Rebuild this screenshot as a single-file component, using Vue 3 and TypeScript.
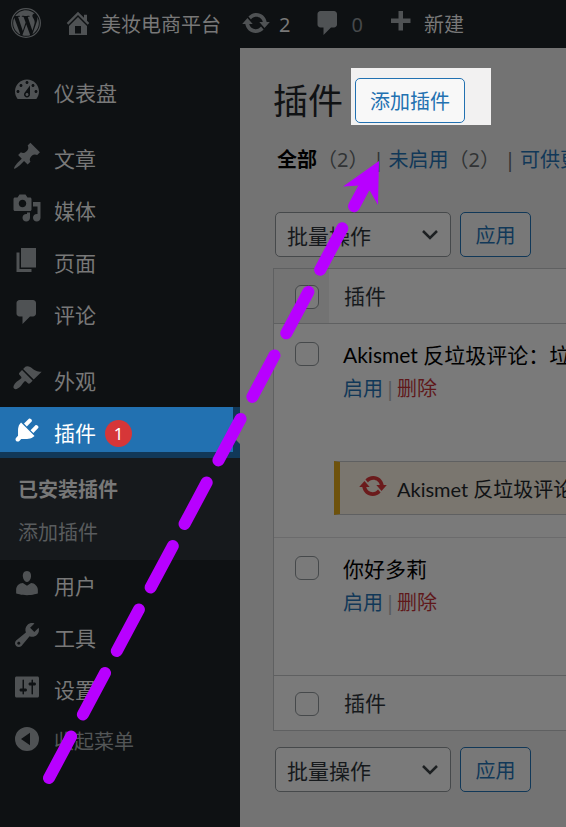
<script setup lang="ts">
import { ref } from 'vue'

interface MenuItem {
  label: string
  icon: string
}

interface Plugin {
  id: string
  name: string
  notice?: string
}

const icons: Record<string, string> = {
  home: 'M16 8.5l1.53 1.53-1.06 1.06L10 4.6l-6.47 6.49-1.06-1.06L10 2.5l4 4v-2h2v4zm-6-2.46l6 5.99V18H4v-5.97zM12 17v-5H8v5h4z',
  update:
    'M10.2 3.28c3.53 0 6.43 2.61 6.92 6h2.08l-3.5 4-3.5-4h2.32c-.45-1.97-2.21-3.45-4.32-3.45-1.45 0-2.73.71-3.54 1.78L4.95 5.66C6.23 4.2 8.11 3.28 10.2 3.28zm-.4 13.44c-3.52 0-6.43-2.61-6.92-6H.8l3.5-4c1.17 1.33 2.33 2.67 3.5 4H5.48c.45 1.97 2.21 3.45 4.32 3.45 1.45 0 2.73-.71 3.54-1.78l1.71 1.95c-1.28 1.46-3.15 2.38-5.25 2.38z',
  comments:
    'M5 2h9c1.1 0 2 .9 2 2v7c0 1.1-.9 2-2 2h-2l-5 5v-5H5c-1.1 0-2-.9-2-2V4c0-1.1.9-2 2-2z',
  plus: 'M17 7v3h-5v5H9v-5H4V7h5V2h3v5h5z',
  dashboard:
    'M3.76 16h12.48c1.1-1.37 1.76-3.11 1.76-5 0-4.42-3.58-8-8-8s-8 3.58-8 8c0 1.89.66 3.63 1.76 5zM10 4c.55 0 1 .45 1 1s-.45 1-1 1-1-.45-1-1 .45-1 1-1zM6 6c.55 0 1 .45 1 1s-.45 1-1 1-1-.45-1-1 .45-1 1-1zm8 0c.55 0 1 .45 1 1s-.45 1-1 1-1-.45-1-1 .45-1 1-1zm-5.37 5.55L12 7v6c0 1.1-.9 2-2 2s-2-.9-2-2c0-.57.24-1.08.63-1.45zM4 10c.55 0 1 .45 1 1s-.45 1-1 1-1-.45-1-1 .45-1 1-1zm12 0c.55 0 1 .45 1 1s-.45 1-1 1-1-.45-1-1 .45-1 1-1zm-5 3c0-.55-.45-1-1-1s-1 .45-1 1 .45 1 1 1 1-.45 1-1z',
  post: 'M10.44 3.02l1.82-1.82 6.36 6.35-1.83 1.82c-1.05-.68-2.48-.57-3.41.36l-.75.75c-.92.93-1.04 2.35-.35 3.41l-1.83 1.82-2.41-2.41-2.8 2.79c-.42.42-3.38 2.71-3.8 2.29s1.86-3.39 2.28-3.81l2.79-2.79L4.1 9.36l1.83-1.82c1.05.69 2.48.57 3.4-.36l.75-.75c.93-.92 1.05-2.35.36-3.41z',
  media:
    'M13 11V4c0-.55-.45-1-1-1h-1.67L9 1H5L3.67 3H2c-.55 0-1 .45-1 1v7c0 .55.45 1 1 1h10c.55 0 1-.45 1-1zM7 4.5c1.38 0 2.5 1.12 2.5 2.5S8.38 9.5 7 9.5 4.5 8.38 4.5 7 5.62 4.5 7 4.5zM14 6h5v10.5c0 1.38-1.12 2.5-2.5 2.5S14 17.88 14 16.5s1.12-2.5 2.5-2.5c.17 0 .34.02.5.05V9h-3V6zm-4 8.05V13h2v3.5c0 1.38-1.12 2.5-2.5 2.5S7 17.88 7 16.5 8.12 14 9.5 14c.17 0 .34.02.5.05z',
  page: 'M6 15V2h10v13H6zm-1 1h8v2H3V5h2v11z',
  appearance:
    'M14.48 11.06L7.41 3.99l1.5-1.5c.5-.56 2.3-.47 3.51.32 1.21.8 1.43 1.28 2.91 2.1 1.18.64 2.45 1.26 4.45.85zm-.71.71L6.7 4.7 4.93 6.47c-.39.39-.39 1.02 0 1.41l1.06 1.06c.39.39.39 1.03 0 1.42-.6.6-1.43 1.11-2.21 1.69-.35.26-.7.53-1.01.84C1.43 14.23.4 16.08 1.4 17.07c.99 1 2.84-.03 4.18-1.36.31-.31.58-.66.85-1.02.57-.78 1.08-1.61 1.69-2.21.39-.39 1.02-.39 1.41 0l1.06 1.06c.39.39 1.02.39 1.41 0z',
  plugins:
    'M13.11 4.36L9.87 7.6 8 5.73l3.24-3.24c.35-.34 1.05-.2 1.56.32.52.51.66 1.21.31 1.55zm-8 1.77l.91-1.12 9.01 9.01-1.19.84c-.71.71-2.63 1.16-3.82 1.16H6.14L4.9 17.26c-.59.59-1.54.59-2.12 0-.59-.58-.59-1.53 0-2.12l1.24-1.24v-3.88c0-1.13.4-3.19 1.09-3.89zm7.26 3.97l3.24-3.24c.34-.35 1.04-.21 1.55.31.52.51.66 1.21.31 1.55l-3.24 3.25z',
  users:
    'M10 9.25c-2.27 0-2.73-3.44-2.73-3.44C7 4.02 7.82 2 9.97 2c2.16 0 2.98 2.02 2.71 3.81 0 0-.41 3.44-2.68 3.44zm0 2.57L12.72 10c2.39 0 4.52 2.33 4.52 4.53v2.49s-3.65 1.13-7.24 1.13c-3.65 0-7.24-1.13-7.24-1.13v-2.49c0-2.25 1.94-4.48 4.47-4.48z',
  tools:
    'M16.68 9.77c-1.34 1.34-3.3 1.67-4.95.99l-5.41 6.52c-.99.99-2.59.99-3.58 0s-.99-2.59 0-3.57l6.52-5.42c-.68-1.65-.35-3.61.99-4.95 1.28-1.28 3.12-1.62 4.72-1.06l-2.89 2.89 2.82 2.82 2.86-2.87c.53 1.58.18 3.39-1.08 4.65zM3.81 16.21c.4.39 1.04.39 1.43 0 .4-.4.4-1.04 0-1.43-.39-.4-1.03-.4-1.43 0-.39.39-.39 1.03 0 1.43z',
  settings:
    'M18 16V4c0-.55-.45-1-1-1H3c-.55 0-1 .45-1 1v12c0 .55.45 1 1 1h14c.55 0 1-.45 1-1zM8 11h1c.55 0 1 .45 1 1s-.45 1-1 1H8v1.5c0 .28-.22.5-.5.5s-.5-.22-.5-.5V13H6c-.55 0-1-.45-1-1s.45-1 1-1h1V5.5c0-.28.22-.5.5-.5s.5.22.5.5V11zm5-2h-1c-.55 0-1-.45-1-1s.45-1 1-1h1V5.5c0-.28.22-.5.5-.5s.5.22.5.5V7h1c.55 0 1 .45 1 1s-.45 1-1 1h-1v5.5c0 .28-.22.5-.5.5s-.5-.22-.5-.5V9z',
  collapse: 'M10 2a8 8 0 1 0 0 16 8 8 0 0 0 0-16zM12 5.8v8.4L6 10z',
}

const menuGroups: MenuItem[][] = [
  [{ label: '仪表盘', icon: 'dashboard' }],
  [
    { label: '文章', icon: 'post' },
    { label: '媒体', icon: 'media' },
    { label: '页面', icon: 'page' },
    { label: '评论', icon: 'comments' },
  ],
  [{ label: '外观', icon: 'appearance' }],
]

const lowerMenu: MenuItem[] = [
  { label: '用户', icon: 'users' },
  { label: '工具', icon: 'tools' },
  { label: '设置', icon: 'settings' },
]

const plugins: Plugin[] = [
  { id: 'akismet', name: 'Akismet 反垃圾评论：垃圾评论保护', notice: 'Akismet 反垃圾评论：垃圾评论保护有新版本可用。' },
  { id: 'dolly', name: '你好多莉' },
]

const selected = ref<string[]>([])
const bulkTop = ref('bulk')
const bulkBottom = ref('bulk')
</script>

<template>
  <div class="admin">
    <header class="topbar">
      <a href="#" class="bar-item logo" aria-label="WordPress">
        <svg class="icon" viewBox="0 0 122.520 122.520">
          <path
            d="M8.708 61.26c0 20.802 12.089 38.779 29.619 47.298l-25.069-68.686c-2.916 6.536-4.55 13.769-4.55 21.388zM96.74 58.608c0-6.495-2.333-10.993-4.334-14.494-2.664-4.329-5.161-7.995-5.161-12.324 0-4.831 3.664-9.328 8.825-9.328.233 0 .454.029.681.042-9.35-8.566-21.807-13.796-35.489-13.796-18.36 0-34.513 9.42-43.91 23.688 1.233.037 2.395.063 3.382.063 5.497 0 14.006-.667 14.006-.667 2.833-.167 3.167 3.994.337 4.329 0 0-2.847.335-6.015.501L48.2 93.547l11.501-34.493-8.188-22.434c-2.83-.166-5.511-.501-5.511-.501-2.832-.166-2.5-4.496.332-4.329 0 0 8.679.667 13.843.667 5.496 0 14.006-.667 14.006-.667 2.835-.167 3.168 3.994.337 4.329 0 0-2.853.335-6.015.501l18.992 56.494 5.242-17.517c2.272-7.269 4.001-12.49 4.001-16.989zM62.184 65.857l-15.768 45.819c4.708 1.384 9.687 2.141 14.846 2.141 6.12 0 11.989-1.058 17.452-2.979-.141-.225-.269-.464-.374-.724zM107.376 36.046c.226 1.674.354 3.471.354 5.404 0 5.333-.996 11.328-3.996 18.824l-16.053 46.413c15.624-9.111 26.133-26.038 26.133-45.426.001-9.137-2.333-17.729-6.438-25.215z"
          />
          <circle class="ring" cx="61.260" cy="61.260" r="58.700" />
        </svg>
      </a>
      <a href="#" class="bar-item site">
        <svg class="icon" viewBox="0 0 20 20"><path :d="icons.home" /></svg>
        <span>美妆电商平台</span>
      </a>
      <a href="#" class="bar-item updates">
        <svg class="icon" viewBox="0 0 20 20"><path :d="icons.update" /></svg>
        <span>2</span>
      </a>
      <a href="#" class="bar-item remarks">
        <svg class="icon" viewBox="0 0 20 20"><path :d="icons.comments" /></svg>
        <span class="faint">0</span>
      </a>
      <a href="#" class="bar-item create">
        <svg class="icon" viewBox="0 0 20 20"><path :d="icons.plus" /></svg>
        <span>新建</span>
      </a>
    </header>

    <div class="body">
      <nav class="sidebar">
        <div v-for="(group, g) in menuGroups" :key="g" class="group">
          <a v-for="item in group" :key="item.label" href="#" class="menu-item">
            <svg class="icon" viewBox="0 0 20 20"><path :d="icons[item.icon]" /></svg>
            <span>{{ item.label }}</span>
          </a>
        </div>
        <div class="current">
          <a href="#" class="menu-item">
            <svg class="icon" viewBox="0 0 20 20"><path :d="icons.plugins" /></svg>
            <span>插件</span>
            <span class="badge">1</span>
          </a>
        </div>
        <div class="submenu">
          <a href="#" class="active">已安装插件</a>
          <a href="#">添加插件</a>
        </div>
        <a v-for="item in lowerMenu" :key="item.label" href="#" class="menu-item">
          <svg class="icon" viewBox="0 0 20 20"><path :d="icons[item.icon]" /></svg>
          <span>{{ item.label }}</span>
        </a>
        <button type="button" class="menu-item collapse">
          <svg class="icon" viewBox="0 0 20 20"><path fill-rule="evenodd" :d="icons.collapse" /></svg>
          <span>收起菜单</span>
        </button>
      </nav>

      <main class="content">
        <div class="title-row">
          <h1>插件</h1>
          <div class="spotlight">
            <button type="button" class="add">添加插件</button>
          </div>
        </div>

        <div class="filters">
          <a href="#" class="all">全部</a><span class="count">（2）</span><span class="bar">|</span>
          <a href="#">未启用</a><span class="count">（2）</span><span class="bar">|</span>
          <a href="#">可供更新</a>
        </div>

        <div class="actions top">
          <div class="picker">
            <select v-model="bulkTop" aria-label="批量操作">
              <option value="bulk">批量操作</option>
              <option value="activate">启用</option>
              <option value="delete">删除</option>
            </select>
            <svg class="chevron" viewBox="0 0 18 12"><path d="M2 2l7 7 7-7" /></svg>
          </div>
          <button type="button" class="apply">应用</button>
        </div>

        <table class="plugins">
          <thead>
            <tr>
              <td class="check shaded"><input type="checkbox" aria-label="全选" /></td>
              <th scope="col">插件</th>
            </tr>
          </thead>
          <tbody v-for="plugin in plugins" :key="plugin.id">
            <tr class="plugin">
              <td class="check">
                <input :id="plugin.id" v-model="selected" type="checkbox" :value="plugin.id" />
              </td>
              <td>
                <label class="name" :for="plugin.id">{{ plugin.name }}</label>
                <div class="links">
                  <a href="#">启用</a><span>|</span><a href="#" class="delete">删除</a>
                </div>
              </td>
            </tr>
            <tr v-if="plugin.notice">
              <td colspan="2" class="notice-cell">
                <div class="notice">
                  <svg class="icon" viewBox="0 0 20 20"><path :d="icons.update" /></svg>
                  <p>{{ plugin.notice }}</p>
                </div>
              </td>
            </tr>
          </tbody>
          <tfoot>
            <tr>
              <td class="check"><input type="checkbox" aria-label="全选" /></td>
              <th scope="col">插件</th>
            </tr>
          </tfoot>
        </table>

        <div class="actions">
          <div class="picker">
            <select v-model="bulkBottom" aria-label="批量操作">
              <option value="bulk">批量操作</option>
              <option value="activate">启用</option>
              <option value="delete">删除</option>
            </select>
            <svg class="chevron" viewBox="0 0 18 12"><path d="M2 2l7 7 7-7" /></svg>
          </div>
          <button type="button" class="apply">应用</button>
        </div>
      </main>
    </div>

    <svg class="pointer" width="400" height="800" viewBox="0 0 400 800" aria-hidden="true">
      <path class="shaft" d="M49 778L367 182" />
      <path class="head" d="M379 161L343 186.500L359.500 185.500L370 191L378 205z" />
    </svg>
  </div>
</template>

<style>
body {
  margin: 0;
  background: #737373;
}
</style>

<style scoped>
.admin {
  position: relative;
  display: flex;
  flex-direction: column;
  min-height: 100vh;
  overflow: hidden;
  font-family: "Noto Sans", "Noto Sans CJK SC", sans-serif;
  font-size: 20px;
  line-height: 28px;
  white-space: nowrap;
  color: #101214;
  background: #737373;
}

a {
  color: #113858;
  text-decoration: none;
}

button,
select {
  font: inherit;
  cursor: pointer;
}

.icon {
  flex: none;
  width: 30px;
  height: 30px;
  fill: #4f5254;
}

.ring {
  fill: none;
  stroke: #4f5254;
  stroke-width: 5;
}

.topbar {
  display: flex;
  align-items: center;
  height: 48px;
  padding-left: 11px;
  background: #0e1113;
}

.bar-item {
  display: flex;
  align-items: center;
  gap: 8px;
  color: #787878;
}

.bar-item span {
  padding-top: 2px;
}

.bar-item .icon {
  margin-bottom: 2px;
}

.bar-item .faint {
  color: #46494b;
}

.site {
  margin-left: 22px;
}

.updates {
  margin-left: 20px;
}

.remarks {
  margin-left: 23px;
}

.create {
  gap: 9px;
  margin-left: 22px;
}

.body {
  display: flex;
  flex: 1;
}

.sidebar {
  flex: none;
  width: 240px;
  padding-top: 19px;
  background: #0e1113;
}

.group {
  margin-bottom: 14px;
}

.group:nth-child(3) {
  margin-bottom: 0;
}

.menu-item {
  display: flex;
  align-items: flex-start;
  gap: 12px;
  box-sizing: border-box;
  height: 52px;
  padding: 8px 12px;
  font-size: 21px;
  line-height: 36px;
  color: #787878;
}

.current {
  position: relative;
  height: 51px;
  background: #113858;
}

.current::after {
  content: "";
  position: absolute;
  top: 21px;
  right: 0;
  border: 8px solid transparent;
  border-left-width: 0;
  border-right-color: #737373;
}

.current .menu-item {
  height: 45px;
  margin-right: 7px;
  color: #fff;
  background: #2271b1;
}

.current .icon {
  fill: #fff;
}

.badge {
  width: 27px;
  height: 27px;
  margin: 5px 0 0 -3px;
  border-radius: 50%;
  font-size: 17px;
  line-height: 27px;
  text-align: center;
  background: #d63638;
}

.submenu {
  display: flex;
  flex-direction: column;
  gap: 15px;
  box-sizing: border-box;
  height: 102px;
  padding: 18px 18px 13px;
  background: #16191c;
}

.submenu a {
  color: #595c5e;
}

.submenu .active {
  font-weight: 700;
  color: #787878;
}

.collapse {
  width: 100%;
  height: 48px;
  border: 0;
  font-size: 20px;
  text-align: left;
  color: #535657;
  background: none;
}

.content {
  flex: 1;
  min-width: 0;
  padding: 20px 0 20px 33px;
}

.title-row {
  display: flex;
  align-items: flex-start;
  gap: 8px;
}

h1 {
  margin: 0;
  padding-top: 10px;
  font-size: 35px;
  font-weight: 400;
  line-height: 46px;
}

.spotlight {
  padding: 10px 26px 2px 4px;
  background: #f2f1f1;
}

.add,
.apply {
  box-sizing: border-box;
  height: 45px;
  padding: 2px 14px 0;
  border: 1px solid #113858;
  border-radius: 5px;
  color: #113858;
  background: #787878;
}

.add {
  display: block;
  border-color: #2271b1;
  color: #2271b1;
  background: #f8f8f8;
}

.filters {
  display: flex;
  padding: 21px 0 0 4px;
  color: #313335;
}

.filters > * {
  flex: none;
}

.all {
  font-weight: 700;
  color: #000;
}

.bar {
  width: 20px;
  text-align: center;
}

.actions {
  display: flex;
  gap: 9px;
  padding: 16px 0 0 2px;
}

.actions.top {
  padding: 38px 0 11px 2px;
}

.apply {
  width: 71px;
}

.picker {
  display: grid;
  align-items: center;
  width: 176px;
}

.picker > * {
  grid-area: 1 / 1;
}

.picker select {
  appearance: none;
  width: 100%;
  height: 45px;
  padding: 2px 36px 0 11px;
  border: 1px solid #46494b;
  border-radius: 5px;
  font-size: 21px;
  color: #16191c;
  background: #7a7a7a;
}

.chevron {
  justify-self: end;
  width: 18px;
  height: 12px;
  margin-right: 12px;
  fill: none;
  stroke: #1d2022;
  stroke-width: 2.5;
  pointer-events: none;
}

.plugins {
  width: 100%;
  min-width: 640px;
  box-sizing: border-box;
  border: 1px solid #5f6061;
  border-collapse: separate;
  border-spacing: 0;
  background: #7a7a7a;
}

.plugins td,
.plugins th {
  padding: 0;
  text-align: left;
  vertical-align: top;
}

.plugins th {
  height: 54px;
  padding-left: 15px;
  font-size: 21px;
  font-weight: 400;
  vertical-align: middle;
  color: #16191c;
}

.plugins .check {
  width: 34px;
  padding: 18px 0 0 21px;
  line-height: 0;
}

thead .check,
thead th {
  border-bottom: 1px solid #5f6061;
}

.plugins thead .check,
.plugins tfoot .check {
  padding-top: 16px;
}

.shaded {
  background: #737373;
}

.check input {
  appearance: none;
  box-sizing: border-box;
  width: 24px;
  height: 24px;
  margin: 0;
  border: 1px solid #46494b;
  border-radius: 6px;
  background: #7a7a7a;
}

.check input:checked {
  background: #113858;
}

.plugin {
  height: 137px;
}

tbody + tbody .plugin {
  height: 138px;
}

.plugins .plugin td:last-child {
  padding: 16px 0 0 14px;
}

.name,
.notice p {
  font-family: Lato, "Noto Sans CJK SC", sans-serif;
}

.name {
  display: block;
  font-size: 21px;
  line-height: 30px;
  color: #000;
}

.links {
  display: flex;
  padding-top: 5px;
}

.links span {
  width: 14px;
  text-align: center;
  color: #57595a;
}

.links .delete {
  color: #5f181a;
}

tbody + tbody td,
tfoot td,
tfoot th {
  border-top: 1px solid #6b6b6c;
}

.plugins tfoot td,
.plugins tfoot th {
  border-top-color: #5f6061;
}

.plugins .notice-cell {
  padding: 0 30px 22px 60px;
}

.notice {
  display: flex;
  align-items: center;
  gap: 9px;
  box-sizing: border-box;
  height: 54px;
  padding-left: 18px;
  border: 1px solid #5f6061;
  border-left: 6px solid #6e520c;
  background: #7a766f;
}

.notice p {
  margin: 0;
  padding-top: 2px;
}

.notice .icon {
  margin-bottom: 4px;
  fill: #6b1b1c;
}

.pointer {
  position: absolute;
  top: 0;
  left: 0;
  pointer-events: none;
}

.shaft {
  fill: none;
  stroke: #b800ff;
  stroke-width: 12;
  stroke-linecap: round;
  stroke-dasharray: 47 25;
}

.head {
  fill: #b800ff;
}
</style>
